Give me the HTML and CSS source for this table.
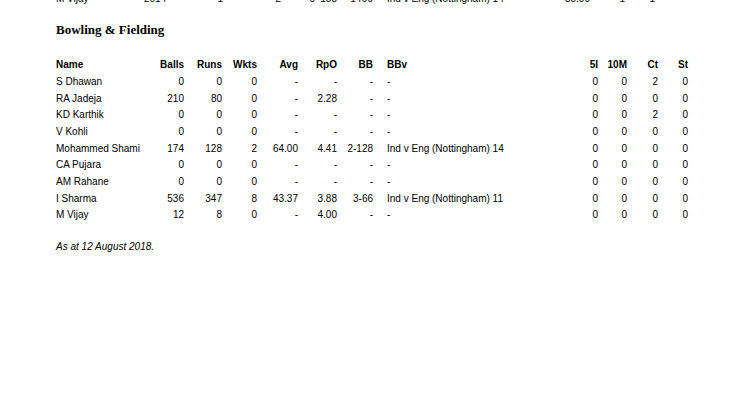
FILE: index.html
```html
<!DOCTYPE html>
<html>
<head>
<meta charset="utf-8">
<link rel="stylesheet" href="styles.css">
</head>
<body>
<div class="page">
  <div class="bat-row">
    <span>M Vijay</span><span>2014</span><span class="r">1</span><span class="r">2</span><span class="r">0</span><span class="r">158</span><span class="r">146</span><span class="r">9</span><span>Ind v Eng (Nottingham) 14</span><span class="r">55.00</span><span class="r">1</span><span class="r">1</span>
  </div>

  <h2 class="heading">Bowling &amp; Fielding</h2>

  <div class="table">
    <div class="row head">
      <span>Name</span><span class="r">Balls</span><span class="r">Runs</span><span class="r">Wkts</span><span class="r">Avg</span><span class="r">RpO</span><span class="r">BB</span><span>BBv</span><span class="r">5I</span><span class="r">10M</span><span class="r">Ct</span><span class="r">St</span>
    </div>
    <div class="row"><span>S Dhawan</span><span class="r">0</span><span class="r">0</span><span class="r">0</span><span class="r">-</span><span class="r">-</span><span class="r">-</span><span>-</span><span class="r">0</span><span class="r">0</span><span class="r">2</span><span class="r">0</span></div>
    <div class="row"><span>RA Jadeja</span><span class="r">210</span><span class="r">80</span><span class="r">0</span><span class="r">-</span><span class="r">2.28</span><span class="r">-</span><span>-</span><span class="r">0</span><span class="r">0</span><span class="r">0</span><span class="r">0</span></div>
    <div class="row"><span>KD Karthik</span><span class="r">0</span><span class="r">0</span><span class="r">0</span><span class="r">-</span><span class="r">-</span><span class="r">-</span><span>-</span><span class="r">0</span><span class="r">0</span><span class="r">2</span><span class="r">0</span></div>
    <div class="row"><span>V Kohli</span><span class="r">0</span><span class="r">0</span><span class="r">0</span><span class="r">-</span><span class="r">-</span><span class="r">-</span><span>-</span><span class="r">0</span><span class="r">0</span><span class="r">0</span><span class="r">0</span></div>
    <div class="row"><span>Mohammed Shami</span><span class="r">174</span><span class="r">128</span><span class="r">2</span><span class="r">64.00</span><span class="r">4.41</span><span class="r">2-128</span><span>Ind v Eng (Nottingham) 14</span><span class="r">0</span><span class="r">0</span><span class="r">0</span><span class="r">0</span></div>
    <div class="row"><span>CA Pujara</span><span class="r">0</span><span class="r">0</span><span class="r">0</span><span class="r">-</span><span class="r">-</span><span class="r">-</span><span>-</span><span class="r">0</span><span class="r">0</span><span class="r">0</span><span class="r">0</span></div>
    <div class="row"><span>AM Rahane</span><span class="r">0</span><span class="r">0</span><span class="r">0</span><span class="r">-</span><span class="r">-</span><span class="r">-</span><span>-</span><span class="r">0</span><span class="r">0</span><span class="r">0</span><span class="r">0</span></div>
    <div class="row"><span>I Sharma</span><span class="r">536</span><span class="r">347</span><span class="r">8</span><span class="r">43.37</span><span class="r">3.88</span><span class="r">3-66</span><span>Ind v Eng (Nottingham) 11</span><span class="r">0</span><span class="r">0</span><span class="r">0</span><span class="r">0</span></div>
    <div class="row"><span>M Vijay</span><span class="r">12</span><span class="r">8</span><span class="r">0</span><span class="r">-</span><span class="r">4.00</span><span class="r">-</span><span>-</span><span class="r">0</span><span class="r">0</span><span class="r">0</span><span class="r">0</span></div>
  </div>

  <p class="note">As at 12 August 2018.</p>
</div>
</body>
</html>
```

FILE: styles.css
```css
html, body {
  margin: 0;
  padding: 0;
  background: #fff;
}

body {
  font-family: "Liberation Sans", Arial, sans-serif;
  font-size: 10px;
  color: #000;
  width: 746px;
  height: 419px;
  overflow: hidden;
}

.page {
  padding-left: 56px;
}

.bat-row {
  display: grid;
  grid-template-columns: 88px 40px 39px 58px 34px 22px 30px 6px 14px 176px 27px 35px 30px;
  height: 16.67px;
  line-height: 16.67px;
  margin-top: -8.6px;
  white-space: nowrap;
}

.bat-row span:nth-child(8) { grid-column: 8; }
.bat-row span:nth-child(9) { grid-column: 10; }
.bat-row span:nth-child(10) { grid-column: 11; }
.bat-row span:nth-child(11) { grid-column: 12; }
.bat-row span:nth-child(12) { grid-column: 13; }

.heading {
  font-family: "Liberation Serif", "Times New Roman", serif;
  font-weight: bold;
  font-size: 13px;
  line-height: 15px;
  margin: 14px 0 0 0;
}

.table {
  margin-top: 20.3px;
}

.row {
  display: grid;
  grid-template-columns: 94px 34px 38px 35px 41px 39px 36px 197px 28px 29px 31px 30px;
  height: 16.67px;
  line-height: 16.67px;
  white-space: nowrap;
}

.row span:nth-child(8) {
  padding-left: 14px;
}

.head {
  font-weight: bold;
}

.r {
  text-align: right;
}

.note {
  font-style: italic;
  line-height: 16.67px;
  margin: 14.7px 0 0 0;
}
```
